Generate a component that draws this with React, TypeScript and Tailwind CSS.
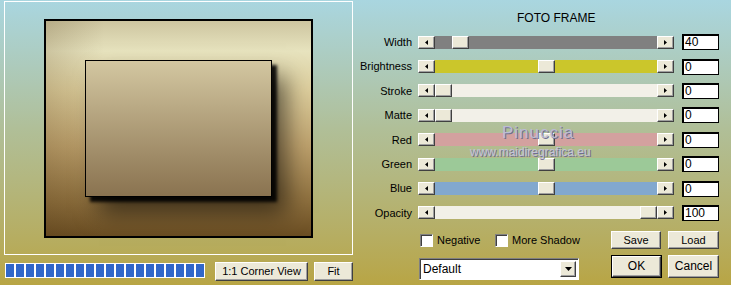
const raised =
  'bg-[#ece9d8] border border-t-white border-l-white border-r-[#404040] border-b-[#404040] shadow-[inset_-1px_-1px_0_#a0a0a0]';

const sliders = [
  { label: 'Width', track: 'bg-[#808080]', pos: 17, value: '40' },
  { label: 'Brightness', track: 'bg-[#cbc62b]', pos: 103, value: '0' },
  { label: 'Stroke', track: 'bg-[#f2f0e8]', pos: 0, value: '0' },
  { label: 'Matte', track: 'bg-[#f2f0e8]', pos: 0, value: '0' },
  { label: 'Red', track: 'bg-[#d3a19f]', pos: 103, value: '0' },
  { label: 'Green', track: 'bg-[#9cc998]', pos: 103, value: '0' },
  { label: 'Blue', track: 'bg-[#82a8ce]', pos: 103, value: '0' },
  { label: 'Opacity', track: 'bg-[#f2f0e8]', pos: 205, value: '100' },
];

function Arrow({ dir }: { dir: 'left' | 'right' | 'down' }) {
  if (dir === 'down')
    return (
      <svg width="7" height="4" viewBox="0 0 7 4">
        <polygon points="0,0 7,0 3.5,4" fill="#000" />
      </svg>
    );
  return (
    <svg width="3" height="5" viewBox="0 0 3 5">
      <polygon points={dir === 'left' ? '3,0 0,2.5 3,5' : '0,0 3,2.5 0,5'} fill="#000" />
    </svg>
  );
}

function Slider({ track, pos }: { track: string; pos: number }) {
  return (
    <div className="flex h-[13px] w-[256px]">
      <div className={`${raised} w-[17px] h-full flex items-center justify-center`}>
        <Arrow dir="left" />
      </div>
      <div className={`relative w-[222px] h-full ${track}`}>
        <div className={`absolute top-0 h-full w-[17px] ${raised}`} style={{ left: pos }} />
      </div>
      <div className={`${raised} w-[17px] h-full flex items-center justify-center`}>
        <Arrow dir="right" />
      </div>
    </div>
  );
}

function Check({ label }: { label: string }) {
  return (
    <div className="flex items-center gap-[4px]">
      <div className="w-[13px] h-[13px] bg-white border border-t-[#808080] border-l-[#808080] border-r-white border-b-white shadow-[inset_1px_1px_0_#404040]" />
      <span>{label}</span>
    </div>
  );
}

export default function App() {
  return (
    <div className="relative w-[731px] h-[285px] flex overflow-hidden bg-linear-to-b from-[#a9d6e0] via-[#b0bf98] via-45% to-[#b8a544] font-['Liberation_Sans',Arial,sans-serif] text-[11px] text-black">
      {/* preview side */}
      <div className="w-[355px] flex flex-col">
        <div className="ml-[4px] mt-[1px] w-[349px] h-[254px] border border-white pt-[17px] pl-[39px]">
          <div className="w-[269px] h-[219px] border-2 border-black pt-[39px] pl-[39px] bg-[linear-gradient(to_right,rgba(80,55,20,0.18),transparent_22%),linear-gradient(to_bottom,#cdc5a0_0%,#e7e3be_14%,#dccd9c_32%,#bca06c_58%,#8c6e3d_84%,#6a4d22_100%)]">
            <div className="w-[187px] h-[137px] border border-black bg-linear-to-b from-[#d3c7a1] to-[#8a7350] shadow-[5px_5px_3px_rgba(0,0,0,0.9),14px_16px_22px_rgba(0,0,0,0.55)]" />
          </div>
        </div>
        <div className="flex items-start mt-[7px]">
          <div className="ml-[5px] mt-[1px] flex gap-[2px] bg-white p-[1px]">
            {Array.from({ length: 20 }).map((_, i) => (
              <div key={i} className="w-[8px] h-[13px] bg-[#3167c9]" />
            ))}
          </div>
          <button className={`${raised} ml-[10px] w-[93px] h-[19px] leading-[15px]`}>1:1 Corner View</button>
          <button className={`${raised} ml-[6px] w-[39px] h-[19px] leading-[15px]`}>Fit</button>
        </div>
      </div>

      {/* controls side */}
      <div className="flex-1 flex flex-col">
        <div className="h-[30px] pt-[11px] pl-[162px] text-[12px] leading-[14px]">FOTO FRAME</div>
        {sliders.map((s) => (
          <div key={s.label} className="h-[24.4px] flex items-center">
            <div className="w-[57px] text-right">{s.label}</div>
            <div className="ml-[6px]">
              <Slider track={s.track} pos={s.pos} />
            </div>
            <div className="ml-[8px] w-[37px] h-[16px] bg-white border border-black border-l-2 border-t-2 pl-[1px] text-[12px] leading-[12px]">
              {s.value}
            </div>
          </div>
        ))}
        <div className="mt-[6px] h-[18px] flex items-center">
          <div className="w-[256px] flex items-center pl-[65px]">
            <div className="w-[75px]">
              <Check label="Negative" />
            </div>
            <Check label="More Shadow" />
          </div>
          <button className={`${raised} w-[50px] h-[18px] leading-[14px]`}>Save</button>
          <button className={`${raised} ml-[7px] w-[51px] h-[18px] leading-[14px]`}>Load</button>
        </div>
        <div className="mt-[6px] flex items-start">
          <div className="ml-[64px] mt-[3px] w-[160px] h-[22px] bg-white border border-t-[#808080] border-l-[#808080] border-r-white border-b-white shadow-[inset_1px_1px_0_#404040] flex items-center justify-between pl-[3px] pr-[2px]">
            <span className="text-[12px]">Default</span>
            <div className={`${raised} w-[16px] h-[16px] flex items-center justify-center`}>
              <Arrow dir="down" />
            </div>
          </div>
          <div className="ml-[32px] w-[51px] h-[23px] border border-black">
            <button className={`${raised} w-full h-full leading-[17px] text-[12px]`}>OK</button>
          </div>
          <button className={`${raised} ml-[6px] w-[51px] h-[23px] leading-[19px] text-[12px]`}>Cancel</button>
        </div>
      </div>

      {/* watermark */}
      <div className="absolute left-[502px] top-[120px] text-[17px] tracking-[1px] text-[#bcbcd4] [text-shadow:1px_1px_0_#6e6e90]">
        Pinuccia
      </div>
      <div className="absolute left-[470px] top-[143px] text-[12px] text-[#c4c4d8] [text-shadow:1px_1px_0_#6e6e90]">
        www.maidiregrafica.eu
      </div>
    </div>
  );
}
